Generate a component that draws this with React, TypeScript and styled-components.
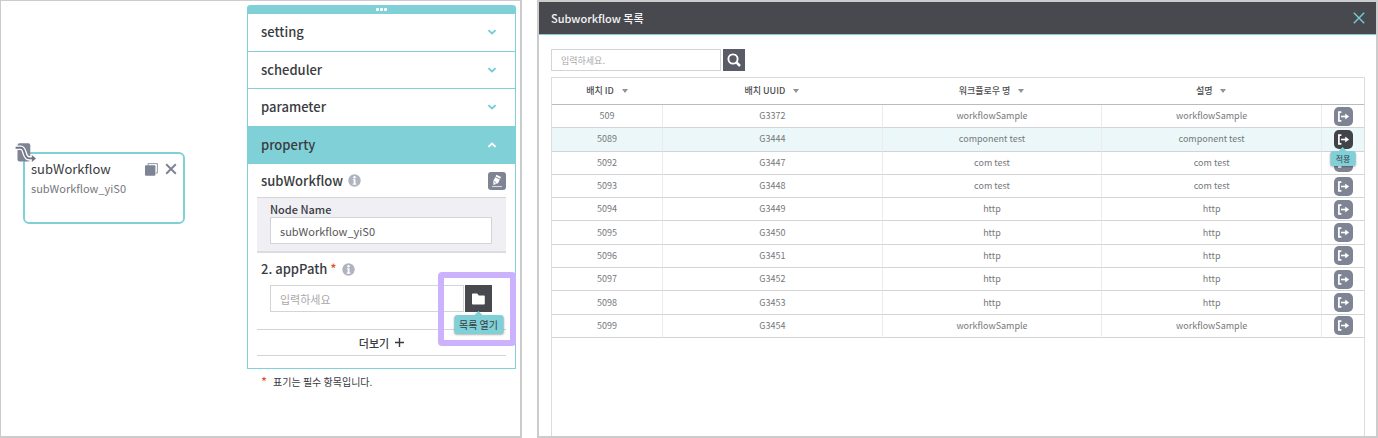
import React, { useState } from 'react';
import styled, { createGlobalStyle } from 'styled-components';

const color = {
  teal: '#80d0d8',
  tealText: '#74ccd6',
  dark: '#48494e',
  slate: '#7f8494',
  text: '#3a3b3f',
  muted: '#76777a',
  line: '#d4d4d6',
  frame: '#cccccc',
  accent: '#d9541e',
  highlight: '#ccb1fd',
};

const GlobalStyle = createGlobalStyle`
  *, *::before, *::after { box-sizing: border-box; }
  html, body { margin: 0; background: #fff; }
  body, button, input {
    font-family: "Noto Sans CJK KR", "Noto Sans", sans-serif;
    color: ${color.text};
  }
  button { border: 0; padding: 0; background: none; cursor: pointer; }
  svg { display: block; }
`;

const Page = styled.main`
  display: grid;
  grid-template-columns: 522fr 841fr;
  gap: 15px;
  min-height: 100vh;
`;

const Frame = styled.section`
  position: relative;
  display: flex;
  border: 2px solid ${color.frame};
  border-top-width: 1px;
  border-left-width: 1px;
`;

const EditorFrame = styled(Frame)`
  justify-content: flex-end;
  padding: 4px 4px 0 0;
`;

const ListFrame = styled(Frame)`
  flex-direction: column;
  border-width: 2px;
`;

/* workflow node on the canvas */
const Node = styled.article`
  position: absolute;
  left: 22px;
  top: 151px;
  width: 162px;
  height: 72px;
  padding: 5px 6px 0;
  border: 2px solid ${color.teal};
  border-radius: 6px;
  background: #fff;
`;

const NodeBadge = styled.span`
  position: absolute;
  left: -10px;
  top: -11px;
`;

const NodeHead = styled.div`
  display: flex;
  align-items: center;
  height: 20px;
  gap: 7px;
`;

const NodeTitle = styled.h2`
  flex: 1;
  margin: 0;
  font-size: 13px;
  line-height: 20px;
  font-weight: 400;
`;

const NodeName = styled.p`
  margin: 0;
  font-size: 11px;
  line-height: 18px;
  color: ${color.muted};
`;

/* property panel */
const Side = styled.aside`
  display: flex;
  flex-direction: column;
  width: 269px;
`;

const Panel = styled.div`
  border: 1px solid ${color.teal};
  border-top: 0;
  border-radius: 4px 4px 0 0;
`;

const Grip = styled.div`
  display: flex;
  align-items: center;
  justify-content: center;
  gap: 1px;
  height: 9px;
  margin: 0 -1px;
  border-radius: 4px 4px 0 0;
  background: ${color.teal};
`;

const GripDot = styled.i`
  width: 3px;
  height: 3px;
  border-radius: 1px;
  background: #fff;
`;

const Sections = styled.div`
  display: grid;
  grid-template-rows: repeat(4, 1fr);
  height: 150px;
`;

const SectionButton = styled.button<{ $open?: boolean }>`
  display: flex;
  align-items: center;
  justify-content: space-between;
  padding: 0 18px 0 13px;
  border-bottom: 1px solid ${color.teal};
  background: ${(p) => (p.$open ? color.teal : '#fff')};
  color: ${(p) => (p.$open ? '#fff' : color.tealText)};
  font-size: 13px;
  line-height: 20px;
  font-weight: 500;
`;

const SectionLabel = styled.span`
  color: ${color.text};
`;

const Body = styled.div`
  padding: 0 9px 12px;
`;

const FieldTitle = styled.div`
  display: flex;
  align-items: center;
  gap: 5px;
  height: 33px;
  padding-left: 4px;
  font-size: 13px;
  line-height: 20px;
  font-weight: 500;
  color: ${color.text};
`;

const PathTitle = styled(FieldTitle)`
  height: 32px;
`;

const Heading = styled.h3`
  margin: 0;
  font: inherit;
`;

const TitleLabel = styled.label`
  font: inherit;
`;

const Required = styled.span`
  color: ${color.accent};
`;

const EditButton = styled.button`
  display: grid;
  place-items: center;
  width: 18px;
  height: 18px;
  margin-left: auto;
  border-radius: 3px;
  background: ${color.slate};
`;

const NameBox = styled.div`
  display: flex;
  flex-direction: column;
  height: 56px;
  padding: 3px 14px 0 13px;
  border-top: 1px solid ${color.line};
  border-bottom: 2px solid #dcdce0;
  background: #f0f0f4;
`;

const NameLabel = styled.label`
  font-size: 11px;
  line-height: 16px;
  font-weight: 500;
`;

const TextInput = styled.input`
  flex: 1;
  min-width: 0;
  height: 27px;
  padding: 0 9px;
  border: 1px solid #d2d5d6;
  border-radius: 0;
  background: #fff;
  color: #555659;
  font-size: 11px;
  outline: 0;
  &::placeholder { color: #a8a8aa; opacity: 1; }
`;

const NameInput = styled(TextInput)`
  flex: none;
`;

const PathRow = styled.div`
  display: flex;
  gap: 1px;
  padding: 0 14px 17px 13px;
`;

const FolderWrap = styled.div`
  position: relative;
`;

const FolderButton = styled.button`
  display: grid;
  place-items: center;
  width: 27px;
  height: 27px;
  background: ${color.dark};
`;

const Highlight = styled.span`
  position: absolute;
  left: -27px;
  top: -13px;
  width: 78px;
  height: 74px;
  border: 6px solid ${color.highlight};
  border-radius: 4px;
  pointer-events: none;
`;

const Tooltip = styled.span<{ $small?: boolean }>`
  position: absolute;
  z-index: 2;
  top: ${(p) => (p.$small ? '21px' : '30px')};
  left: 50%;
  transform: translateX(-50%);
  padding: 0 5px;
  border-radius: 3px;
  background: ${color.teal};
  box-shadow: 0 1px 2px rgba(0, 0, 0, 0.3);
  color: ${color.text};
  font-size: ${(p) => (p.$small ? '8px' : '10px')};
  line-height: ${(p) => (p.$small ? '15px' : '19px')};
  white-space: nowrap;
  &::before {
    content: '';
    position: absolute;
    left: 50%;
    bottom: 100%;
    margin-left: -4px;
    border: 4px solid transparent;
    border-top-width: 0;
    border-bottom-color: ${color.teal};
  }
`;

const MoreButton = styled.button`
  display: flex;
  align-items: center;
  justify-content: center;
  gap: 6px;
  width: 100%;
  height: 27px;
  border-top: 1px solid ${color.line};
  border-bottom: 1px solid ${color.line};
  font-size: 11px;
  line-height: 16px;
  font-weight: 500;
`;

const Footnote = styled.p`
  display: flex;
  gap: 6px;
  margin: 4px 0 0 14px;
  font-size: 10px;
  line-height: 18px;
`;

const FootnoteMark = styled(Required)`
  font-size: 13px;
`;

/* sub-workflow list */
const ListHeader = styled.header`
  display: flex;
  align-items: center;
  justify-content: space-between;
  height: 33px;
  padding: 0 11px 0 12px;
  border-bottom: 1px solid ${color.teal};
  background: ${color.dark};
`;

const ListTitle = styled.h1`
  margin: 0;
  color: #f4f4f5;
  font-size: 11px;
  line-height: 18px;
  font-weight: 500;
`;

const ListBody = styled.div`
  display: flex;
  flex: 1;
  flex-direction: column;
  gap: 6px;
  padding: 14px 11px 0 12px;
`;

const SearchForm = styled.form`
  display: flex;
  gap: 2px;
`;

const SearchInput = styled(TextInput)`
  flex: none;
  width: 170px;
  height: 22px;
  font-size: 9px;
`;

const SearchButton = styled.button`
  display: grid;
  place-items: center;
  width: 22px;
  height: 22px;
  background: #595b67;
`;

const TableArea = styled.div`
  flex: 1;
  border: 1px solid #dcdcde;
  border-bottom: 0;
`;

const Table = styled.table`
  width: 100%;
  height: 260px;
  border-collapse: separate;
  border-spacing: 0;
  table-layout: fixed;
`;

const IdCol = styled.col`
  width: 110px;
`;

const ActionCol = styled.col`
  width: 43px;
`;

const HeadCell = styled.th`
  height: 27px;
  padding: 0;
  border-bottom: 1px solid #bbbbbd;
  color: #4c4d50;
  font-size: 9px;
  line-height: 14px;
  font-weight: 500;
`;

const SortButton = styled.button`
  display: inline-flex;
  align-items: center;
  gap: 8px;
  vertical-align: middle;
  color: inherit;
  font: inherit;
`;

const Row = styled.tr<{ $selected?: boolean }>`
  background: ${(p) => (p.$selected ? '#ebf7f9' : '#fff')};
`;

const Cell = styled.td`
  padding: 0;
  border-bottom: 1px solid ${color.line};
  color: ${color.muted};
  font-size: 9px;
  line-height: 14px;
  text-align: center;
  & + & { border-left: 1px solid #ebebec; }
`;

const ApplyWrap = styled.div`
  position: relative;
  width: 19px;
  margin: 0 auto;
`;

const ApplyButton = styled.button<{ $active?: boolean }>`
  display: grid;
  place-items: center;
  width: 19px;
  height: 19px;
  border-radius: 5px;
  background: ${(p) => (p.$active ? '#424348' : color.slate)};
`;

const Chevron = ({ up }: { up?: boolean }) => (
  <svg width="10" height="6" viewBox="0 0 10 6" fill="none" stroke="currentColor" strokeWidth="1.9">
    <path d={up ? 'M1.4 4.9 5 1.5 8.6 4.9' : 'M1.4 1.1 5 4.5 8.6 1.1'} />
  </svg>
);

const InfoIcon = () => (
  <svg width="13" height="13" viewBox="0 0 13 13">
    <circle cx="6.5" cy="6.5" r="6.2" fill="#b0b3c0" />
    <circle cx="6.5" cy="3.2" r="1.2" fill="#fff" />
    <path d="M4.9 5.2h2.6v4.3h.9v1.2H4.7V9.500h1V6.300h-.8z" fill="#fff" />
  </svg>
);

const PencilIcon = () => (
  <svg width="14" height="14" viewBox="0 0 14 14">
    <path d="M6.4.8 11 3 10.200 4.700 5.600 2.500z" fill="#fff" />
    <path d="M5.200 3.300 9.900 5.500 8 9.300 3.500 11.100 3.300 7.100z" fill="#fff" />
    <path d="M3.900 7.500 5.400 8 6.200 9.700" fill="none" stroke={color.slate} strokeWidth=".7" />
    <path d="M2 12.500h10" stroke="#d5d7de" strokeWidth="1.100" />
  </svg>
);

const FolderIcon = () => (
  <svg width="13" height="12" viewBox="0 0 13 12" fill="#fff">
    <path d="M.8.5h4.4l1.6 1.9h5.2q.8 0 .8.8v7.3q0 .9-.8.9H.8q-.8 0-.8-.9V1.3Q0 .5.8.5z" />
  </svg>
);

const PlusIcon = () => (
  <svg width="9" height="9" viewBox="0 0 9 9" stroke={color.text} strokeWidth="1.4">
    <path d="M4.5 0v9M0 4.5h9" />
  </svg>
);

const CopyIcon = () => (
  <svg width="13" height="13" viewBox="0 0 13 13">
    <path d="M3 2.5V.6h9.4V10h-1.8" fill="none" stroke="#9599a8" strokeWidth="1" />
    <rect x="0" y="2.3" width="10.4" height="10.4" rx="1" fill={color.slate} />
  </svg>
);

const NodeCloseIcon = () => (
  <svg width="12" height="12" viewBox="0 0 12 12" stroke={color.slate} strokeWidth="2">
    <path d="m1.2 1.2 9.6 9.6M10.8 1.2 1.2 10.8" />
  </svg>
);

const CloseIcon = () => (
  <svg width="12" height="12" viewBox="0 0 12 12" stroke={color.tealText} strokeWidth="1.4">
    <path d="m.8.8 10.4 10.4M11.2.8.8 11.2" />
  </svg>
);

const SearchIcon = () => (
  <svg width="14" height="14" viewBox="0 0 14 14" fill="none" stroke="#fff">
    <circle cx="6" cy="6" r="4.6" strokeWidth="1.9" />
    <path d="m9.2 9.2 3.8 3.8" strokeWidth="2.5" />
  </svg>
);

const SortIcon = () => (
  <svg width="6" height="4" viewBox="0 0 6 4">
    <path d="M0 0h6L3 4z" fill="#919296" />
  </svg>
);

const ApplyIcon = () => (
  <svg width="13" height="13" viewBox="0 0 13 13" fill="none" stroke="#fff">
    <path d="M4.400 2.100H1.900v8.800h2.500" strokeWidth="1.700" />
    <path d="M4 6.500h5.200" strokeWidth="1.600" />
    <path d="M8.400 4.100 11.800 6.500 8.400 8.900z" fill="#fff" strokeWidth=".5" strokeLinejoin="round" />
  </svg>
);

const SubWorkflowIcon = () => (
  <svg width="22" height="20" viewBox="0 0 22 20" fill="none">
    <rect x="2.500" y="0.300" width="12.800" height="18.200" rx="2" fill={color.slate} />
    <path d="M1.500 4.800h4.400c4.800 0 2.400 10.600 8.400 10.600h3" stroke="#fff" strokeWidth="4.600" />
    <path d="M0.600 4.800h5.300c4.800 0 2.400 10.600 8.400 10.600h4" stroke="#6f7484" strokeWidth="1.900" />
    <path d="M16.800 11.900 21 15.400 16.800 18.900z" fill="#6f7484" />
  </svg>
);

const sections = ['setting', 'scheduler', 'parameter', 'property'];
const columns = ['배치 ID', '배치 UUID', '워크플로우 명', '설명'];
const rows = [
  ['509', 'G3372', 'workflowSample'],
  ['5089', 'G3444', 'component test'],
  ['5092', 'G3447', 'com test'],
  ['5093', 'G3448', 'com test'],
  ['5094', 'G3449', 'http'],
  ['5095', 'G3450', 'http'],
  ['5096', 'G3451', 'http'],
  ['5097', 'G3452', 'http'],
  ['5098', 'G3453', 'http'],
  ['5099', 'G3454', 'workflowSample'],
];

const Editor = () => {
  const [name, setName] = useState('subWorkflow_yiS0');
  return (
    <EditorFrame>
      <Node>
        <NodeBadge><SubWorkflowIcon /></NodeBadge>
        <NodeHead>
          <NodeTitle>subWorkflow</NodeTitle>
          <button type="button" aria-label="복사"><CopyIcon /></button>
          <button type="button" aria-label="삭제"><NodeCloseIcon /></button>
        </NodeHead>
        <NodeName>{name}</NodeName>
      </Node>
      <Side>
        <Panel>
          <Grip><GripDot /><GripDot /><GripDot /></Grip>
          <Sections>
            {sections.map((s) => {
              const open = s === 'property';
              return (
                <SectionButton key={s} type="button" $open={open} aria-expanded={open}>
                  <SectionLabel>{s}</SectionLabel>
                  <Chevron up={open} />
                </SectionButton>
              );
            })}
          </Sections>
          <Body>
            <FieldTitle>
              <Heading>subWorkflow</Heading>
              <InfoIcon />
              <EditButton type="button" aria-label="편집"><PencilIcon /></EditButton>
            </FieldTitle>
            <NameBox>
              <NameLabel htmlFor="node-name">Node Name</NameLabel>
              <NameInput id="node-name" value={name} onChange={(e) => setName(e.target.value)} />
            </NameBox>
            <PathTitle>
              <TitleLabel htmlFor="app-path">2. appPath <Required>*</Required></TitleLabel>
              <InfoIcon />
            </PathTitle>
            <PathRow>
              <TextInput id="app-path" placeholder="입력하세요" />
              <FolderWrap>
                <Highlight />
                <FolderButton type="button" aria-label="목록 열기"><FolderIcon /></FolderButton>
                <Tooltip role="tooltip">목록 열기</Tooltip>
              </FolderWrap>
            </PathRow>
            <MoreButton type="button">더보기 <PlusIcon /></MoreButton>
          </Body>
        </Panel>
        <Footnote><FootnoteMark>*</FootnoteMark> 표기는 필수 항목입니다.</Footnote>
      </Side>
    </EditorFrame>
  );
};

const SubworkflowList = () => (
  <ListFrame>
    <ListHeader>
      <ListTitle>Subworkflow 목록</ListTitle>
      <button type="button" aria-label="닫기"><CloseIcon /></button>
    </ListHeader>
    <ListBody>
      <SearchForm onSubmit={(e) => e.preventDefault()}>
        <SearchInput type="text" aria-label="검색어" placeholder="입력하세요." />
        <SearchButton type="submit" aria-label="검색"><SearchIcon /></SearchButton>
      </SearchForm>
      <TableArea>
        <Table>
          <colgroup><IdCol /><col /><col /><col /><ActionCol /></colgroup>
          <thead>
            <tr>
              {columns.map((c) => (
                <HeadCell key={c} scope="col">
                  <SortButton type="button">{c} <SortIcon /></SortButton>
                </HeadCell>
              ))}
              <HeadCell scope="col" aria-label="적용" />
            </tr>
          </thead>
          <tbody>
            {rows.map(([id, uuid, label]) => {
              const selected = id === '5089';
              return (
                <Row key={id} $selected={selected}>
                  <Cell>{id}</Cell>
                  <Cell>{uuid}</Cell>
                  <Cell>{label}</Cell>
                  <Cell>{label}</Cell>
                  <Cell>
                    <ApplyWrap>
                      <ApplyButton type="button" aria-label="적용" $active={selected}><ApplyIcon /></ApplyButton>
                      {selected && <Tooltip role="tooltip" $small>적용</Tooltip>}
                    </ApplyWrap>
                  </Cell>
                </Row>
              );
            })}
          </tbody>
        </Table>
      </TableArea>
    </ListBody>
  </ListFrame>
);

export default function App() {
  return (
    <>
      <GlobalStyle />
      <Page>
        <Editor />
        <SubworkflowList />
      </Page>
    </>
  );
}
